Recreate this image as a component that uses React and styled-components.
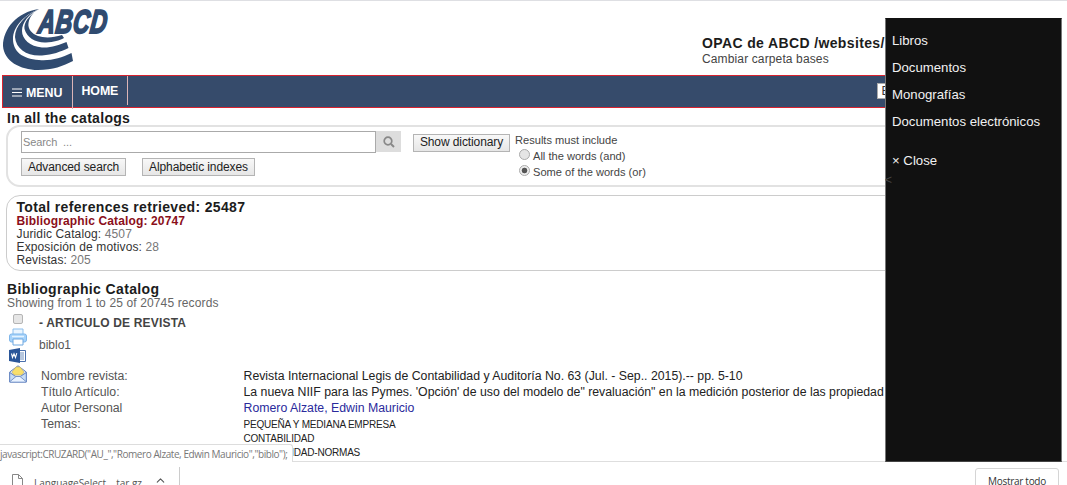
import React from "react";
import styled, { createGlobalStyle } from "styled-components";
import { ChevronUp } from "lucide-react";

const Global = createGlobalStyle`
  * { box-sizing: border-box; }
  body { margin: 0; background: #fff; font-family: "Liberation Sans", Arial, sans-serif; color: #444; overflow: hidden; }
`;
const Screen = styled.div`
  position: relative; width: 1067px; height: 485px; overflow: hidden;
  display: flex; flex-direction: column; border-top: 1px solid #dedfe3;
`;
const Page = styled.main`height: 460px; overflow: hidden;`;
const Line = styled.div`
  white-space: pre;
  font-size: ${(p) => p.$size || 12}px;
  line-height: ${(p) => p.$lh || 13}px;
  font-weight: ${(p) => (p.$bold ? 700 : 400)};
  letter-spacing: ${(p) => p.$ls || 0}px;
  color: ${(p) => p.$color || "#444"};
`;
const Header = styled.header`height: 74px; display: flex; justify-content: space-between; padding: 6px 0 0 3px;`;
const SiteInfo = styled.div`width: 365px; padding-top: 28px;`;
const Nav = styled.nav`
  height: 33px; margin: 0 6px 0 2px; border: 1px solid #d8232f; background: #364b6b;
  display: flex; justify-content: space-between; color: #fff;
`;
const NavItems = styled.div`display: flex;`;
const NavItem = styled.div`
  height: ${(p) => p.$h}px; width: ${(p) => p.$w}px; padding-left: ${(p) => p.$pl}px;
  display: flex; align-items: center; gap: 4px; border-right: 1px solid #dcb4b6;
  font-size: 12.4px; font-weight: 700; letter-spacing: ${(p) => p.$ls}px; white-space: nowrap;
`;
const LangSelect = styled.div`
  width: 140px; height: 16px; margin: 7px 43.5px 0 0; padding-left: 4px;
  border: 1px solid #aaa; background: #fff; color: #333; font-size: 12px; line-height: 14px;
`;
const SectionTitle = styled.div`padding-left: 7px; height: 17px; padding-top: 3px;`;
const Panel = styled.section`
  margin: 0 6px; border: ${(p) => p.$b || 1}px solid ${(p) => p.$c || "#ccc"};
  border-radius: 14px; height: ${(p) => p.$h}px;
`;
const SearchPanel = styled(Panel)`display: flex; padding: 4px 0 0 13px;`;
const SearchLeft = styled.div`width: 380px;`;
const SearchRow = styled.div`display: flex; height: 22px;`;
const SearchField = styled.div`
  width: 355px; border: 1px solid #aaa; padding-left: 1px; display: flex; align-items: center;
`;
const SearchIcon = styled.div`
  width: 25px; height: 21px; background: #ddd; display: flex; align-items: center; justify-content: center;
`;
const ButtonRow = styled.div`display: flex; gap: 16px; padding-top: 5px;`;
const Button = styled.button`
  width: ${(p) => p.$w}px; height: 18px; padding: 0; border: 1px solid #b4b4b4; border-radius: 0;
  background: linear-gradient(#f8f8f8, #e6e6e6); color: #222; white-space: nowrap;
  font: 12px/15px "Liberation Sans", Arial, sans-serif; letter-spacing: -0.1px;
`;
const DictionaryCell = styled.div`padding: 1px 0 0 12px;`;
const Options = styled.div`padding: 2px 0 0 5px;`;
const Option = styled.div`display: flex; align-items: center; height: 16px; padding-left: 4px; gap: 3px;`;
const Radio = styled.span`
  width: 11px; height: 11px; margin-top: -3px; border: 1px solid #aaa; border-radius: 50%;
  background: ${(p) => (p.$on ? "radial-gradient(circle, #555 0 2.5px, #eee 3.2px)" : "#e5e5e5")};
`;
const TotalsPanel = styled(Panel)`margin-top: 8px; padding: 4px 0 0 9.5px;`;
const Muted = styled.span`color: #777;`;
const Results = styled.section`padding: 11px 0 0 7px;`;
const Record = styled.article`display: flex; padding-top: 4px;`;
const Tools = styled.div`width: 32px; display: flex; flex-direction: column; padding-left: 2px;`;
const Checkbox = styled.span`
  width: 10px; height: 10px; margin: 0 0 4px 4px; border: 1px solid #b5b5b5; border-radius: 2px; background: #e6e6e6;
`;
const RecordBody = styled.div`flex: 1;`;
const Fields = styled.div`
  display: grid; grid-template-columns: 202.5px 1fr; grid-auto-rows: 16px; padding: 10px 0 0 2px;
`;
const Topics = styled.div`padding-top: 2px;`;
const Drawer = styled.aside`
  position: absolute; left: 885px; top: 17px; width: 177px; height: 444px;
  background: #111; border: 1px solid #777; border-top-color: #111; border-bottom-color: #444; padding: 8px 0 0 6px;
`;
const DrawerLink = styled.div`
  height: 27px; line-height: 28px; font-size: 13.2px; color: #f1f1f1; white-space: nowrap;
`;
const CloseLink = styled(DrawerLink)`margin-top: 12px; height: 27px;`;
const Stray = styled.div`margin-left: -7px; font-size: 12px; line-height: 12px; color: #444;`;
const StatusBubble = styled.div`
  position: absolute; left: 0; top: 443px; width: 293px; height: 18px;
  background: #fff; border: 1px solid #ddd; border-width: 1px 1px 0 0; border-top-right-radius: 3px;
  font: 10px/18px "Open Sans", sans-serif; letter-spacing: -0.43px; color: #777; white-space: nowrap;
`;
const Downloads = styled.footer`
  height: 24px; border-top: 1px solid #dedede; display: flex; justify-content: space-between; overflow: hidden;
`;
const DownloadItem = styled.div`
  width: 180px; margin-top: 5px; height: 30px; padding: 7px 0 0 12px; border-right: 1px solid #ccc; display: flex;
  font: 10px/18px "Open Sans", sans-serif; letter-spacing: -0.05px; color: #555; white-space: pre;
`;
const DownloadName = styled.span`width: 131px; padding-left: 11px;`;
const ShowAll = styled.div`
  width: 84px; height: 32px; margin: 6px 8px 0 0; border: 1px solid #d5d5d5; border-radius: 3px;
  text-align: center; font: 10px/24px "Open Sans", sans-serif; letter-spacing: -0.3px; color: #333; white-space: nowrap;
`;

const Logo = () => (
  <svg width="112" height="68" viewBox="3 7 112 68" fill="#304b70">
    <path d="M39 9C17 12 3 29 3 46C4 61 20 70 38 70C53 70 63 66 73 61L71.5 53C61 58 51 61 39 60C22 59 13 51 13 39C13 27 24 15 39 9Z" />
    <path d="M39 9C25 15 15 26 15 37C16 49 27 56.500 42 55.500C53 54.500 60 52 68.500 48L66.500 42C59 45 51 48 42 47.500C30 46.500 22 39 22 31C22 22 29 14 39 9Z" />
    <path d="M39 9C29 15 23.500 23 24.500 29C27 38 36 43 46 42.500C54 42 59 40.500 64 38L62 35C53 38 44 38 38 36C32 34 27.500 29 28.500 23C29.500 17 33 12 39 9Z" />
    <g transform="translate(37.500 32.500) skewX(-7)">
      <text fontFamily="Liberation Sans" fontSize="33" fontWeight="700" fontStyle="italic" stroke="#304b70" strokeWidth="2" textLength="69" lengthAdjust="spacingAndGlyphs" letterSpacing="1">ABCD</text>
    </g>
  </svg>
);
const Printer = () => (
  <svg width="18" height="19" viewBox="0 0 18 19">
    <path d="M4 1h10v7H4z" fill="#eaf5ff" stroke="#8dbfec" />
    <rect x=".5" y="6" width="17" height="8" rx="2" fill="#a5d2fa" stroke="#7fb6ea" />
    <path d="M3 8.5h12" stroke="#e4f3ff" strokeWidth="1.5" />
    <path d="M4 11h10v6H4z" fill="#fff" stroke="#6fa8e0" />
  </svg>
);
const Word = () => (
  <svg width="18" height="18" viewBox="0 0 18 18">
    <path d="M9 3.5h7.5v11H9z" fill="#fff" stroke="#4a70ad" />
    <path d="M10 6h5M10 8h5M10 10h5M10 12h5" stroke="#6f8fbe" />
    <path d="M0 3l11-2v15L0 14z" fill="#2a5699" />
    <path d="M2.500 6.500l1 4 1.500-3.800 1.500 3.800 1.300-4.300" fill="none" stroke="#fff" strokeWidth="1.100" />
  </svg>
);
const Mail = () => (
  <svg width="18" height="18" viewBox="0 0 18 18">
    <path d="M.7 7L9 .8 17.3 7v10H.7z" fill="#dce9f8" stroke="#6382bd" />
    <path d="M3 7L7 2h4l4 5-2 3H5z" fill="#f8df6b" stroke="#c9b56b" strokeWidth=".7" />
    <path d="M.7 7.5l6 4h4.6l6-4V17H.7z" fill="#c6dcf5" stroke="#6685c2" />
    <path d="M1 16.5l6-5h4l6 5" fill="#eaf3ff" stroke="#7896ca" />
  </svg>
);
const FileIcon = () => (
  <svg width="11" height="15" viewBox="0 0 11 15" fill="#fff" stroke="#888">
    <path d="M.5.5h6l4 4v10H.5zM6.5.5v4h4" />
  </svg>
);

export default function App() {
  return (
    <>
      <Global />
      <Screen>
        <Page>
          <Header>
            <Logo />
            <SiteInfo>
              <Line $size={14} $lh={16} $bold $ls={0.37} $color="#1c1c1c">OPAC de ABCD /websites/</Line>
              <Line $lh={16} $ls={0.13}>Cambiar carpeta bases</Line>
            </SiteInfo>
          </Header>
          <Nav>
            <NavItems>
              <NavItem $w={70} $h={33} $pl={9} $ls={0}>
                <svg width="10" height="9" stroke="#fff"><path d="M0 1h10M0 4.5h10M0 8h10" /></svg>
                MENU
              </NavItem>
              <NavItem $w={55} $h={29} $pl={8.5} $ls={-0.1}>HOME</NavItem>
            </NavItems>
            <LangSelect>E</LangSelect>
          </Nav>
          <SectionTitle><Line $size={14} $lh={15} $bold $ls={0.3} $color="#1c1c1c">In all the catalogs</Line></SectionTitle>
          <SearchPanel $h={62} $b={2} $c="#e2e2e2">
            <SearchLeft>
              <SearchRow>
                <SearchField><Line $size={11} $ls={-0.12} $color="#888">Search  ...</Line></SearchField>
                <SearchIcon>
                  <svg width="12" height="12" fill="none" stroke="#888" strokeWidth="1.7"><circle cx="5" cy="5" r="3.8" /><path d="M8 8l3 3" strokeWidth="2" /></svg>
                </SearchIcon>
              </SearchRow>
              <ButtonRow>
                <Button $w={105}>Advanced search</Button>
                <Button $w={113}>Alphabetic indexes</Button>
              </ButtonRow>
            </SearchLeft>
            <DictionaryCell><Button $w={97}>Show dictionary</Button></DictionaryCell>
            <Options>
              <Line $size={11.1} $lh={15}>Results must include</Line>
              <Option><Radio /><Line $size={11.1}>All the words (and)</Line></Option>
              <Option><Radio $on /><Line $size={11.1}>Some of the words (or)</Line></Option>
            </Options>
          </SearchPanel>
          <TotalsPanel $h={76}>
            <Line $size={14} $lh={15} $bold $ls={0.34} $color="#1c1c1c">Total references retrieved: 25487</Line>
            <Line $bold $ls={0.14} $color="#8b0f1a">Bibliographic Catalog: 20747</Line>
            <Line $ls={0.13} $color="#333">Juridic Catalog: <Muted>4507</Muted></Line>
            <Line $ls={0.13} $color="#333">Exposición de motivos: <Muted>28</Muted></Line>
            <Line $ls={0.13} $color="#333">Revistas: <Muted>205</Muted></Line>
          </TotalsPanel>
          <Results>
            <Line $size={14} $lh={15} $bold $ls={0.37} $color="#1c1c1c">Bibliographic Catalog</Line>
            <Line $ls={0.13} $color="#666">Showing from 1 to 25 of 20745 records</Line>
            <Record>
              <Tools><Checkbox /><Printer /><Word /><Mail /></Tools>
              <RecordBody>
                <Line $lh={18} $bold $ls={0.18}>- ARTICULO DE REVISTA</Line>
                <Line $lh={26} $color="#555">biblo1</Line>
                <Fields>
                  <Line $lh={16} $size={12.3} $color="#555">Nombre revista:</Line>
                  <Line $lh={16} $size={12.3} $color="#222">Revista Internacional Legis de Contabilidad y Auditoría No. 63 (Jul. - Sep.. 2015).-- pp. 5-10</Line>
                  <Line $lh={16} $size={12.3} $color="#555">Título Artículo:</Line>
                  <Line $lh={16} $size={12.3} $color="#222">La nueva NIIF para las Pymes. 'Opción' de uso del modelo de" revaluación" en la medición posterior de las propiedad</Line>
                  <Line $lh={16} $size={12.3} $color="#555">Autor Personal</Line>
                  <Line $lh={16} $size={12.3} $color="#2a2a9c">Romero Alzate, Edwin Mauricio</Line>
                  <Line $lh={16} $size={12.3} $color="#555">Temas:</Line>
                  <Topics>
                    <Line $size={10} $lh={14} $ls={-0.2} $color="#222">PEQUEÑA Y MEDIANA EMPRESA</Line>
                    <Line $size={10} $lh={14} $ls={-0.2} $color="#222">CONTABILIDAD</Line>
                    <Line $size={10} $lh={14} $ls={-0.2} $color="#222">CONTABILIDAD-NORMAS</Line>
                  </Topics>
                </Fields>
              </RecordBody>
            </Record>
          </Results>
        </Page>
        <Downloads>
          <DownloadItem><FileIcon /><DownloadName>LanguageSelect....tar.gz</DownloadName><ChevronUp size={13} /></DownloadItem>
          <ShowAll>Mostrar todo</ShowAll>
        </Downloads>
        <StatusBubble>javascript:CRUZARD("AU_","Romero Alzate, Edwin Mauricio","biblo");</StatusBubble>
        <Drawer>
          <DrawerLink>Libros</DrawerLink>
          <DrawerLink>Documentos</DrawerLink>
          <DrawerLink>Monografías</DrawerLink>
          <DrawerLink>Documentos electrónicos</DrawerLink>
          <CloseLink>× Close</CloseLink>
          <Stray>&lt;</Stray>
        </Drawer>
      </Screen>
    </>
  );
}
